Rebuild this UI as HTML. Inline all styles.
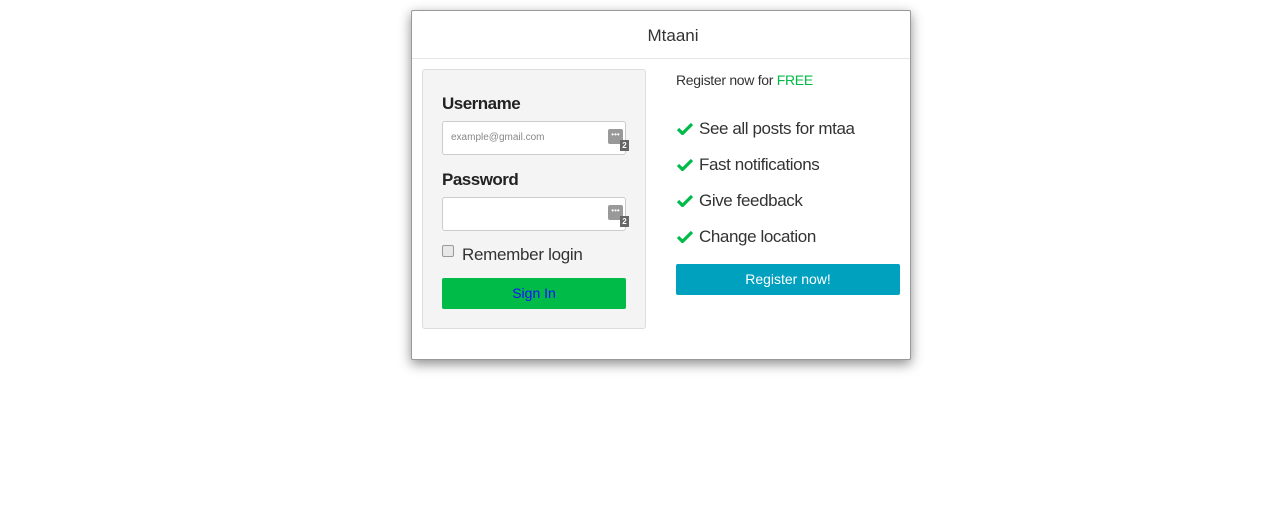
<!DOCTYPE html>
<html><head><style>
*{box-sizing:border-box;margin:0;padding:0}
body{width:1286px;height:526px;background:#fff;font-family:"Liberation Sans",sans-serif;color:#333;position:relative;overflow:hidden}
.a{position:absolute}
.card{left:411px;top:10px;width:500px;height:350px;border:1px solid #999;border-radius:2px;box-shadow:0 4px 12px rgba(0,0,0,.45);background:#fff}
.hdr{left:0;top:0;width:498px;height:48px;border-bottom:1px solid #e5e5e5;text-align:center;line-height:50px;font-size:17px;color:#333;padding-left:24px}
.well{left:10px;top:58px;width:224px;height:260px;background:#f4f4f4;border:1px solid #ddd;border-radius:3px}
.lbl{font-weight:bold;font-size:17px;color:#222;letter-spacing:-0.5px}
.inp{width:184px;height:34px;background:#fff;border:1px solid #ccc;border-radius:3px;font-size:10px;color:#888;padding:10px 8px}
.kp{width:15px;height:15px;background:#999;border-radius:2px;color:#fff;font-size:8px;line-height:12px;text-align:center}
.kn{width:9px;height:11px;background:#666;color:#fff;font-size:8px;font-weight:bold;line-height:11px;text-align:center}
.chk{width:12px;height:12px;border:1px solid #999;border-radius:2px;background:#e8e8e8}
.btn{border-radius:2px;text-align:center;font-size:14px}
.li{font-size:17px;color:#333;letter-spacing:-0.4px}
.li svg{position:absolute;left:0;top:3px}
.li span{position:absolute;left:22px;white-space:nowrap}
</style></head><body>
<div class="a card">
 <div class="a hdr">Mtaani</div>
 <div class="a well">
  <div class="a lbl" style="left:19px;top:24px">Username</div>
  <div class="a inp" style="left:19px;top:51px">example@gmail.com</div>
  <div class="a kp" style="left:185px;top:59px">•••</div>
  <div class="a kn" style="left:197px;top:70px">2</div>
  <div class="a lbl" style="left:19px;top:100px">Password</div>
  <div class="a inp" style="left:19px;top:127px"></div>
  <div class="a kp" style="left:185px;top:135px">•••</div>
  <div class="a kn" style="left:197px;top:146px">2</div>
  <div class="a chk" style="left:19px;top:175px"></div>
  <div class="a" style="left:39px;top:175px;font-size:17px;color:#333;letter-spacing:-0.3px">Remember login</div>
  <div class="a btn" style="left:19px;top:208px;width:184px;height:31px;background:#00bb48;color:#1a0dff;line-height:31px">Sign In</div>
 </div>
 <div class="a" style="left:264px;top:61px;font-size:14px;color:#333;letter-spacing:-0.3px">Register now for <span style="color:#00bb48">FREE</span></div>
 <div class="a li" style="left:265px;top:108px"><svg width="16" height="13" viewBox="0 0 16 13"><path d="M1 7l4.5 4.5L15 2" stroke="#00bb48" stroke-width="3.2" fill="none"/></svg><span>See all posts for mtaa</span></div>
 <div class="a li" style="left:265px;top:144px"><svg width="16" height="13" viewBox="0 0 16 13"><path d="M1 7l4.5 4.5L15 2" stroke="#00bb48" stroke-width="3.2" fill="none"/></svg><span>Fast notifications</span></div>
 <div class="a li" style="left:265px;top:180px"><svg width="16" height="13" viewBox="0 0 16 13"><path d="M1 7l4.5 4.5L15 2" stroke="#00bb48" stroke-width="3.2" fill="none"/></svg><span>Give feedback</span></div>
 <div class="a li" style="left:265px;top:216px"><svg width="16" height="13" viewBox="0 0 16 13"><path d="M1 7l4.5 4.5L15 2" stroke="#00bb48" stroke-width="3.2" fill="none"/></svg><span>Change location</span></div>
 <div class="a btn" style="left:264px;top:253px;width:224px;height:31px;background:#00a0bf;color:#fff;line-height:30px">Register now!</div>
</div>
</body></html>
